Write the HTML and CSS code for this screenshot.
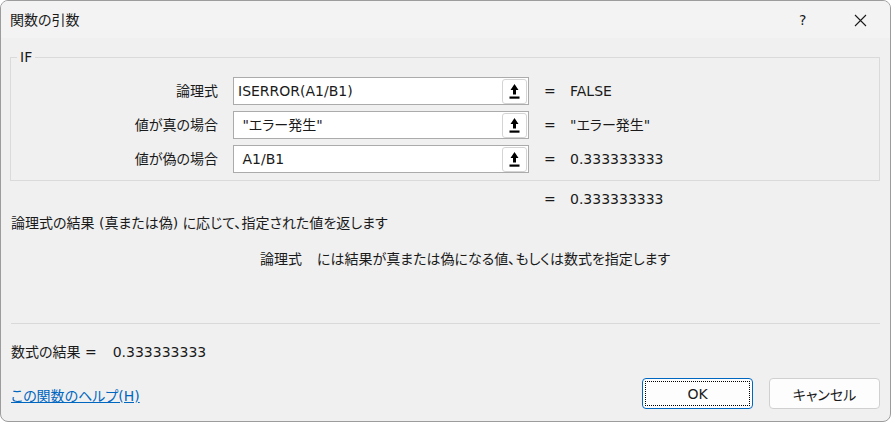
FILE: index.html
```html
<!DOCTYPE html>
<html lang="ja">

<head>
  <meta charset="UTF-8">
  <title>関数の引数</title>
  <link rel="stylesheet" href="styles.css">
</head>

<body>
  <div class="window">

    <header class="titlebar">
      <span class="title">関数の引数</span>
      <span class="help-btn">?</span>
      <span class="close-btn">
        <svg width="13" height="13" viewBox="0 0 13 13"><path d="M1 1L12 12M12 1L1 12" stroke="#1a1a1a" stroke-width="1.1" fill="none"/></svg>
      </span>
    </header>

    <main class="content">
      <fieldset class="group">
        <legend>IF</legend>
        <div class="args">
          <span class="arg-label">論理式</span>
          <div class="field">
            <span class="field-text">ISERROR(A1/B1)</span>
            <button class="ref-btn"><svg width="11" height="15" viewBox="0 0 11 15"><path d="M5.5 0L9.5 6H7V10.5H4V6H1.5Z" fill="#000"/><rect x="0.5" y="12.5" width="10" height="2.2" fill="#000"/></svg></button>
          </div>
          <span class="eq">=</span>
          <span class="val">FALSE</span>

          <span class="arg-label">値が真の場合</span>
          <div class="field">
            <span class="field-text"> "エラー発生"</span>
            <button class="ref-btn"><svg width="11" height="15" viewBox="0 0 11 15"><path d="M5.5 0L9.5 6H7V10.5H4V6H1.5Z" fill="#000"/><rect x="0.5" y="12.5" width="10" height="2.2" fill="#000"/></svg></button>
          </div>
          <span class="eq">=</span>
          <span class="val">"エラー発生"</span>

          <span class="arg-label">値が偽の場合</span>
          <div class="field">
            <span class="field-text"> A1/B1</span>
            <button class="ref-btn"><svg width="11" height="15" viewBox="0 0 11 15"><path d="M5.5 0L9.5 6H7V10.5H4V6H1.5Z" fill="#000"/><rect x="0.5" y="12.5" width="10" height="2.2" fill="#000"/></svg></button>
          </div>
          <span class="eq">=</span>
          <span class="val">0.333333333</span>
        </div>
      </fieldset>

      <div class="args total">
        <span></span>
        <span></span>
        <span class="eq">=</span>
        <span class="val">0.333333333</span>
      </div>

      <p class="desc">論理式の結果 (真または偽) に応じて、指定された値を返します</p>
      <p class="param-desc"><span class="param-name">論理式</span>には結果が真または偽になる値、もしくは数式を指定します</p>

      <div class="footer">
        <div class="result">数式の結果 =<span class="result-val">0.333333333</span></div>
        <div class="actions">
          <a href="#" class="help-link">この関数のヘルプ(H)</a>
          <button class="btn btn-ok"><span>OK</span></button>
          <button class="btn">キャンセル</button>
        </div>
      </div>
    </main>

  </div>
</body>

</html>
```

FILE: styles.css
```css
*,
*::before,
*::after {
  box-sizing: border-box;
}

body {
  margin: 0;
  background: #ffffff;
  font-family: "DejaVu Sans", "Noto Sans CJK JP", sans-serif;
  font-size: 14px;
  font-feature-settings: "palt";
  color: #1a1a1a;
}

.window {
  display: flex;
  flex-direction: column;
  width: 891px;
  height: 422px;
  border: 1px solid #9c9c9c;
  border-radius: 8px;
  overflow: hidden;
  background: #f0f0f0;
}

/* title bar */
.titlebar {
  display: flex;
  align-items: center;
  height: 37px;
  background: #f3f3f3;
  padding-left: 9px;
}

.title {
  flex: 1;
  line-height: 20px;
  margin-top: 1px;
}

.help-btn {
  width: 18px;
  line-height: 20px;
  margin-right: 37px;
}

.close-btn {
  display: flex;
  margin-right: 23px;
  margin-top: 1px;
}

/* content */
.content {
  flex: 1;
  display: flex;
  flex-direction: column;
  padding: 0 10px 0 9px;
}

.group {
  margin: 10px 0 0;
  padding: 0 0 7px;
  border: 1px solid #dadada;
}

.group legend {
  margin-left: 6px;
  padding: 0 3px;
  line-height: 18px;
}

.args {
  display: grid;
  grid-template-columns: 222px 296px 41px 1fr;
  grid-auto-rows: 28px;
  row-gap: 6px;
  align-items: center;
  padding-top: 11px;
}

.arg-label {
  text-align: right;
  padding-right: 15px;
  line-height: 20px;
}

.field {
  display: flex;
  align-items: center;
  height: 28px;
  background: #ffffff;
  border: 1px solid #ababab;
  padding-left: 4px;
  padding-right: 1px;
}

.field-text {
  flex: 1;
  white-space: pre;
  line-height: 20px;
}

.ref-btn {
  display: flex;
  align-items: center;
  justify-content: center;
  width: 25px;
  height: 25px;
  padding: 0;
  background: #ffffff;
  border: 1px solid #d4d4d4;
  border-radius: 3px;
}

.eq {
  padding-left: 15px;
  line-height: 20px;
}

.val {
  line-height: 20px;
}

.total {
  padding-top: 0;
  margin-top: 4px;
  margin-left: 1px;
}

.desc {
  margin: 0 0 0 1px;
  line-height: 20px;
}

.param-desc {
  margin: 16px 0 0 250px;
  line-height: 20px;
}

.param-name {
  margin-right: 15px;
}

/* footer */
.footer {
  margin-top: auto;
  border-top: 1px solid #d9d9d9;
  margin-left: 1px;
}

.result {
  margin-top: 18px;
  line-height: 20px;
}

.result-val {
  margin-left: 16px;
}

.actions {
  display: flex;
  align-items: center;
  margin-top: 16px;
  margin-bottom: 12px;
  gap: 16px;
}

.help-link {
  flex: 1;
  color: #0067c0;
  line-height: 20px;
  padding-top: 4px;
}

.btn {
  width: 111px;
  height: 31px;
  font-family: inherit;
  font-size: 14px;
  font-feature-settings: "palt";
  color: #1a1a1a;
  background: #fdfdfd;
  border: 1px solid #d0d0d0;
  border-radius: 4px;
}

.btn-ok {
  padding: 2px;
  border-color: #0067c0;
}

.btn-ok span {
  display: flex;
  align-items: center;
  justify-content: center;
  height: 100%;
  border: 1px dotted #000000;
}
```
